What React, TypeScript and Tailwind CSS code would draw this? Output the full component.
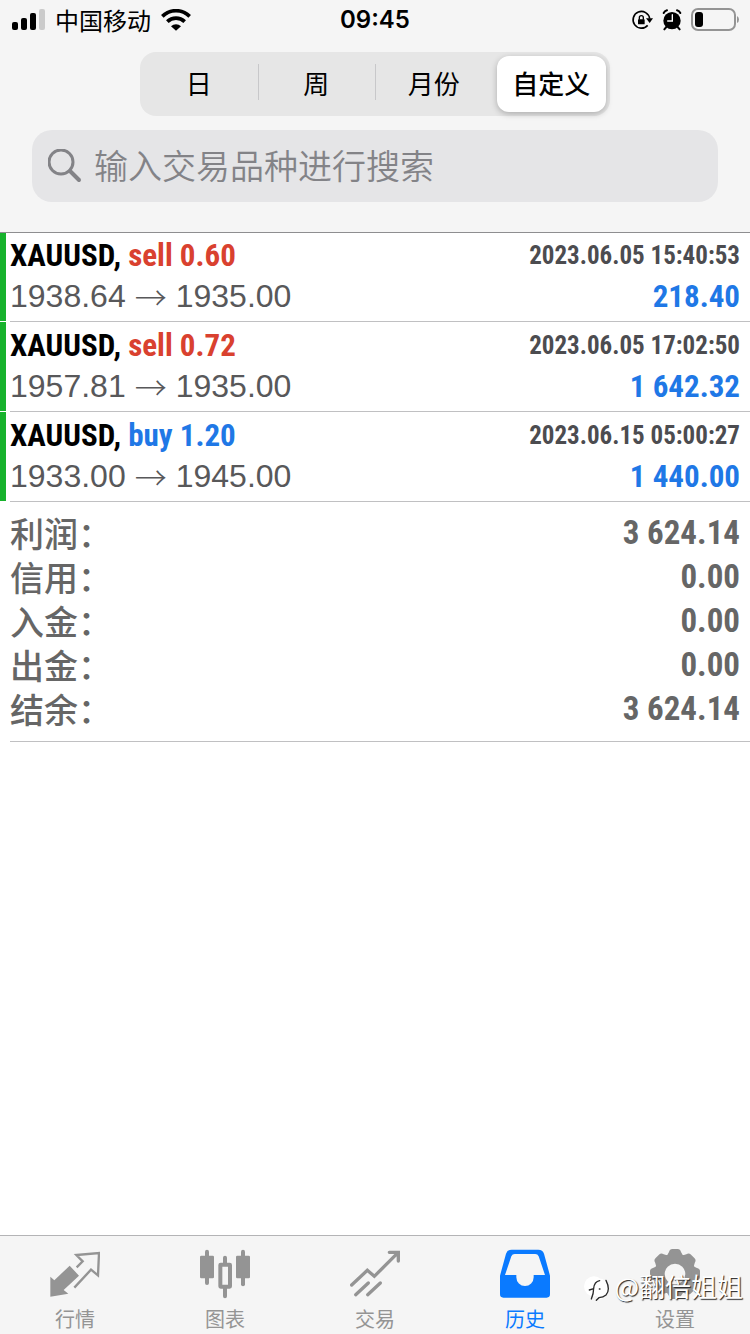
import { useState } from 'react';
import type { ReactNode } from 'react';
import clsx from 'clsx';

type Order = {
  symbol: string;
  side: 'sell' | 'buy';
  volume: string;
  time: string;
  open: string;
  close: string;
  profit: string;
};

const orders: Order[] = [
  { symbol: 'XAUUSD', side: 'sell', volume: '0.60', time: '2023.06.05 15:40:53', open: '1938.64', close: '1935.00', profit: '218.40' },
  { symbol: 'XAUUSD', side: 'sell', volume: '0.72', time: '2023.06.05 17:02:50', open: '1957.81', close: '1935.00', profit: '1 642.32' },
  { symbol: 'XAUUSD', side: 'buy', volume: '1.20', time: '2023.06.15 05:00:27', open: '1933.00', close: '1945.00', profit: '1 440.00' },
];

const totals = [
  { label: '利润', value: '3 624.14' },
  { label: '信用', value: '0.00' },
  { label: '入金', value: '0.00' },
  { label: '出金', value: '0.00' },
  { label: '结余', value: '3 624.14' },
];

const periods = ['日', '周', '月份', '自定义'];

const NARROW = "font-['Roboto_Condensed','Liberation_Sans_Narrow','Liberation_Sans',sans-serif] font-bold";

function QuotesIcon() {
  return (
    <svg viewBox="0 0 150 150" className="size-[50px]" fill="none" stroke="currentColor" strokeWidth="7">
      <path d="M1 83L13 94L59 50L87 80L41 123L55 134L1 143Z" fill="currentColor" stroke="none" />
      <path d="M80 55L98 37L79 18L147 12L144 79L123 62L73 116" />
    </svg>
  );
}

function ChartIcon() {
  return (
    <svg viewBox="0 0 150 150" className="size-[50px]" fill="none" stroke="currentColor" strokeWidth="12" strokeLinecap="round">
      <rect x="0" y="20" width="42" height="68" rx="4" fill="currentColor" stroke="none" />
      <path d="M21 8V102" />
      <rect x="61" y="47" width="29" height="66" rx="1" />
      <path d="M75 26V42M75 118V142" />
      <rect x="108" y="20" width="42" height="68" rx="4" fill="currentColor" stroke="none" />
      <path d="M129 8V106" />
    </svg>
  );
}

function TradeIcon() {
  return (
    <svg viewBox="0 0 150 150" className="size-[50px]" fill="none" stroke="currentColor" strokeWidth="10" strokeLinecap="round">
      <path d="M5 108L52 64L73 82L144 11M118 10H145V36" />
      <path d="M17 137L55 102M53 137L91 102" />
    </svg>
  );
}

function HistoryIcon() {
  return (
    <svg viewBox="0 0 150 150" className="size-[50px]" fill="currentColor">
      <path
        fillRule="evenodd"
        d="M0 80L18 14Q22 2 35 2H115Q128 2 132 14L150 80V136Q150 146 140 146H10Q0 146 0 136ZM15 78H49V85A26 26 0 0 0 101 85V78H135L116 22Q113 15 106 15H44Q37 15 34 22Z"
      />
    </svg>
  );
}

function SettingsIcon() {
  return (
    <svg viewBox="-75 -75 150 150" className="size-[50px]" fill="currentColor">
      <circle r="45" fill="none" stroke="currentColor" strokeWidth="28" />
      {[0, 45, 90, 135, 180, 225, 270, 315].map((angle) => (
        <path key={angle} d="M-30 -50Q-21 -58 -18 -66Q-16 -75 -8 -75H8Q16 -75 18 -66Q21 -58 30 -50Z" transform={`rotate(${angle})`} />
      ))}
    </svg>
  );
}

const tabs: { label: string; icon: ReactNode; active?: boolean }[] = [
  { label: '行情', icon: <QuotesIcon /> },
  { label: '图表', icon: <ChartIcon /> },
  { label: '交易', icon: <TradeIcon /> },
  { label: '历史', icon: <HistoryIcon />, active: true },
  { label: '设置', icon: <SettingsIcon /> },
];

function StatusBar() {
  return (
    <div className="grid h-10 grid-cols-3 items-center px-[11px] text-black">
      <div className="flex items-center gap-[10px]">
        <svg viewBox="0 0 34 24" className="h-6 w-[34px]">
          <rect x="1" y="14" width="6" height="8" rx="2" />
          <rect x="10" y="10" width="6" height="12" rx="2" />
          <rect x="19" y="5" width="6" height="17" rx="2" />
          <rect x="28" y="1" width="6" height="21" rx="2" fill="#cbcbcb" />
        </svg>
        <span className="text-2xl whitespace-nowrap">中国移动</span>
        <svg viewBox="0 0 90 66" className="h-[22px] w-[30px]" fill="none" stroke="black" strokeWidth="11">
          <path d="M4 22A58 58 0 0 1 86 22" />
          <path d="M19 38A37 37 0 0 1 71 38" />
          <path d="M45 65L30 52A22 22 0 0 1 60 52Z" fill="black" stroke="none" />
        </svg>
      </div>
      <time className="text-center font-['Inter',sans-serif] text-2xl font-semibold">09:45</time>
      <div className="flex items-center justify-end gap-[9px]">
        <svg viewBox="0 0 66 66" className="size-[22px]" fill="none" stroke="black" strokeWidth="5">
          <path d="M50 49A25 25 0 1 1 56 29" />
          <path d="M45 28H66L56 42Z" fill="black" stroke="none" />
          <rect x="21" y="31" width="20" height="15" rx="2" fill="black" stroke="none" />
          <path d="M25 32V26A6 6 0 0 1 37 26V32" strokeWidth="4" />
        </svg>
        <svg viewBox="0 0 60 66" className="h-[22px] w-5" fill="none" stroke="black" strokeWidth="6" strokeLinecap="round">
          <circle cx="30" cy="35" r="26" fill="black" stroke="none" />
          <path d="M5 12Q8 6 15 4M45 4Q52 6 55 12M13 54L7 61M47 54L53 61" />
          <path d="M31 17V36H17" stroke="white" strokeWidth="4" />
        </svg>
        <svg viewBox="0 0 48 24" className="h-6 w-12">
          <rect x="1" y="1" width="43" height="21" rx="6" fill="none" stroke="#949494" strokeWidth="2" />
          <rect x="4" y="4" width="8" height="15" rx="3" />
          <path d="M46 8Q48 9 48 11.5T46 15Z" fill="#949494" />
        </svg>
      </div>
    </div>
  );
}

function PeriodPicker() {
  const [selected, setSelected] = useState('自定义');

  return (
    <div className="mx-auto mt-3 grid h-16 w-full max-w-[470px] grid-cols-4 rounded-2xl bg-[#e6e6e6]">
      {periods.map((period, i) => (
        <div key={period} className="relative flex p-1">
          {i > 0 && period !== selected && <span className="absolute top-3 left-0 h-9 w-px bg-[#c8c8ca]" />}
          <button
            type="button"
            onClick={() => setSelected(period)}
            className={clsx(
              'flex-1 rounded-xl pb-[3px] text-[26px] text-black',
              period === selected && 'bg-white font-medium shadow-[0_2px_6px_rgba(0,0,0,0.25)]'
            )}
          >
            {period}
          </button>
        </div>
      ))}
    </div>
  );
}

function SearchBox() {
  return (
    <label className="mx-8 mt-[14px] flex h-[72px] items-center gap-3 rounded-[20px] bg-[#e5e5e7] px-4 text-[#838387]">
      <svg viewBox="0 0 34 34" className="size-[34px] shrink-0" fill="none" stroke="currentColor">
        <circle cx="13" cy="13" r="12" strokeWidth="3" />
        <path d="M22 22L31 31" strokeWidth="4" strokeLinecap="round" />
      </svg>
      <input
        type="search"
        aria-label="输入交易品种进行搜索"
        placeholder="输入交易品种进行搜索"
        className="min-w-0 flex-1 bg-transparent pb-[3px] text-[34px] font-[350] outline-none placeholder:text-[#838387]"
      />
    </label>
  );
}

function OrderRow({ order }: { order: Order }) {
  return (
    <li className="flex">
      <span className="mb-px w-[6px] shrink-0 bg-[#17b22c]" />
      <div className="ml-1 flex flex-1 justify-between border-b border-[#c0c0c2] pt-[3px] pr-[10px] pb-1">
        <div>
          <p className={clsx(NARROW, 'text-[31px] leading-[41px] text-black')}>
            {order.symbol},{' '}
            <span className={order.side === 'sell' ? 'text-[#d9412f]' : 'text-[#1f78e6]'}>
              {order.side} {order.volume}
            </span>
          </p>
          <p className="flex items-center gap-[9px] font-['Liberation_Sans',sans-serif] text-[32px] leading-[41px] text-[#58585a]">
            <span>{order.open}</span>
            <span className="font-['Noto_Sans_CJK_SC',sans-serif] font-light">→</span>
            <span>{order.close}</span>
          </p>
        </div>
        <div className={clsx(NARROW, 'text-right')}>
          <p className="text-[25px] leading-[41px] text-[#4c4c50]">{order.time}</p>
          <p className="text-[31px] leading-[41px] text-[#1f78e6]">{order.profit}</p>
        </div>
      </div>
    </li>
  );
}

function TabBar() {
  return (
    <nav className="relative mt-auto grid h-[99px] grid-cols-5 border-t border-[#b4b4b6] bg-[#f5f5f5]">
      {tabs.map((tab) => (
        <a
          key={tab.label}
          href="#"
          className={clsx('flex flex-col items-center pt-[13px]', tab.active ? 'text-[#0a7aff]' : 'text-[#949494]')}
        >
          {tab.icon}
          <span className="mt-1 text-xl leading-8">{tab.label}</span>
        </a>
      ))}
      <div className="absolute right-[7px] bottom-[30px] flex items-center text-white">
        <svg viewBox="0 0 90 90" className="size-[30px]" fill="none" stroke="#2b2b2b" strokeWidth="4" strokeLinecap="round">
          <circle cx="30" cy="46" r="30" fill="white" stroke="none" />
          <path d="M40 86Q80 84 72 40Q60 20 44 24Z" fill="white" stroke="none" />
          <path d="M22 84Q29 68 29 52Q31 32 47 29M16 57L29 53M46 54H48" />
          <path d="M66 28Q80 56 66 72Q58 79 45 80L37 88" />
        </svg>
        <span className="text-[26px] leading-9 [text-shadow:1px_1px_1px_#222]">@翻倍姐姐</span>
      </div>
    </nav>
  );
}

export default function App() {
  return (
    <div className="flex min-h-screen flex-col bg-white font-['Noto_Sans_CJK_SC',sans-serif]">
      <header className="relative bg-[#f5f5f5] pb-[30px] shadow-[0_1px_0_#8e8e90]">
        <StatusBar />
        <PeriodPicker />
        <SearchBox />
      </header>

      <main>
        <ul>
          {orders.map((order) => (
            <OrderRow key={order.time} order={order} />
          ))}
        </ul>

        <dl className="ml-[10px] border-b border-[#c0c0c2] pt-[9px] pr-[10px] pb-[10px] text-[#666666]">
          {totals.map((total) => (
            <div key={total.label} className="flex justify-between leading-[44px]">
              <dt className="text-[34px] font-medium">{total.label}：</dt>
              <dd className={clsx(NARROW, 'text-[33px]')}>{total.value}</dd>
            </div>
          ))}
        </dl>
      </main>

      <TabBar />
    </div>
  );
}
